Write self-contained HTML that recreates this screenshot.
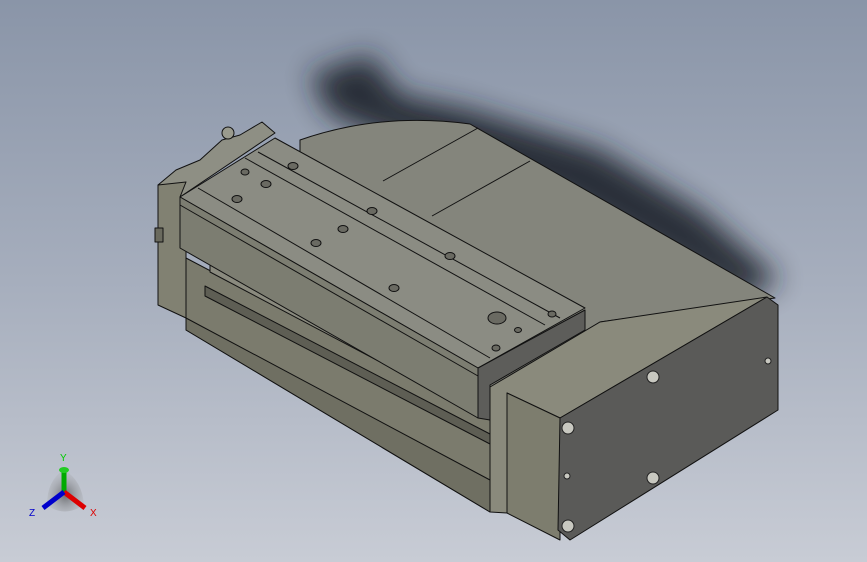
<!DOCTYPE html>
<html><head><meta charset="utf-8"><style>
html,body{margin:0;padding:0;width:867px;height:562px;overflow:hidden}
body{background:linear-gradient(180deg,#8a95a8 0%,#a6aebd 50%,#c8ccd5 100%)}
svg{position:absolute;left:0;top:0}
</style></head><body>
<svg width="867" height="562" viewBox="0 0 867 562">
<defs>
<filter id="bl" x="-30%" y="-30%" width="160%" height="160%"><feGaussianBlur stdDeviation="14"/></filter>
<radialGradient id="tri" cx="50%" cy="60%" r="50%"><stop offset="0" stop-color="#333"/><stop offset="1" stop-color="#999" stop-opacity="0.3"/></radialGradient>
</defs>
<!-- shadow -->
<polygon points="310,75 370,55 400,95 470,110 600,150 700,210 780,280 740,300 560,200 420,150 330,115" fill="#1e232c" opacity="0.9" filter="url(#bl)"/>
<g stroke="#111" stroke-width="1" stroke-linejoin="round">
<!-- motor housing top -->
<path d="M300,140 Q380,112 470,124 L775,298 L600,322 L490,388 L300,280 Z" fill="#84857c"/>
<line x1="383" y1="181" x2="478" y2="128"/>
<line x1="432" y1="216" x2="530" y2="161"/>
<!-- base rail lower -->
<polygon points="186,258 490,418 490,512 186,330" fill="#7b7b6d"/>
<polygon points="186,318 490,480 490,512 186,330" fill="#6f6f62"/>
<polygon points="205,286 490,434 490,444 205,296" fill="#5e5e54"/>
<polygon points="210,262 490,410 490,420 210,272" fill="#8a8a7e"/>
<!-- left block -->
<polygon points="158,185 175,175 186,182 186,318 158,305" fill="#818172"/>
<polygon points="158,185 176,170 200,160 222,140 240,135 262,122 275,133 180,197 186,182" fill="#8e8f84"/>
<rect x="155" y="228" width="8" height="14" fill="#6a6a5e"/>
<circle cx="228" cy="133" r="6" fill="#9a9b8e"/>
<!-- carriage top -->
<polygon points="180,197 275,138 585,308 478,368" fill="#8b8c83"/>
<line x1="198" y1="188" x2="490" y2="358"/>
<line x1="245" y1="158" x2="545" y2="325"/>
<line x1="258" y1="152" x2="560" y2="318"/>
<!-- carriage front face -->
<polygon points="180,197 478,368 478,418 180,248" fill="#7c7d71"/>
<line x1="180" y1="205" x2="478" y2="376"/>
<!-- carriage end plate -->
<polygon points="478,368 585,310 585,330 490,385 490,420 478,418" fill="#5d5d5a"/>
<!-- holes -->
<g fill="#6a6a62">
<ellipse cx="237" cy="199" rx="5" ry="3.5"/><ellipse cx="245" cy="172" rx="4" ry="3"/><ellipse cx="266" cy="184" rx="5" ry="3.5"/>
<ellipse cx="293" cy="166" rx="5" ry="3.5"/><ellipse cx="372" cy="211" rx="5" ry="3.5"/><ellipse cx="343" cy="229" rx="5" ry="3.5"/>
<ellipse cx="316" cy="243" rx="5" ry="3.5"/><ellipse cx="450" cy="256" rx="5" ry="3.5"/><ellipse cx="394" cy="288" rx="5" ry="3.5"/>
<ellipse cx="497" cy="318" rx="9" ry="6"/><ellipse cx="518" cy="330" rx="3.5" ry="2.5"/><ellipse cx="552" cy="314" rx="4" ry="3"/><ellipse cx="496" cy="348" rx="4" ry="3"/>
</g>
<!-- end block -->
<polygon points="490,387 600,322 767,297 560,418 507,393 507,513 490,512" fill="#8a8a7c"/>
<polygon points="507,393 560,418 560,540 507,513" fill="#7d7d6e"/>
<polygon points="560,418 767,297 778,305 778,410 570,540 558,530" fill="#5a5a58"/>
<g fill="#c8c8c0" stroke="#222">
<circle cx="568" cy="428" r="6"/><circle cx="653" cy="377" r="6"/><circle cx="653" cy="478" r="6"/><circle cx="568" cy="526" r="6"/>
<circle cx="768" cy="361" r="3"/><circle cx="567" cy="476" r="3"/>
</g>
</g>
<!-- triad -->
<path d="M47,505 Q47,480 64,470 Q82,480 84,505 Q64,518 47,505 Z" fill="url(#tri)" opacity="0.6"/>
<line x1="64" y1="492" x2="64" y2="470" stroke="#0a0" stroke-width="5"/>
<ellipse cx="64" cy="470" rx="5" ry="3" fill="#2c2"/>
<line x1="64" y1="492" x2="85" y2="508" stroke="#d00" stroke-width="5"/>
<line x1="64" y1="492" x2="43" y2="508" stroke="#00c" stroke-width="5"/>
<text x="60" y="461" font-family="Liberation Sans,sans-serif" font-size="10" fill="#0c0">Y</text>
<text x="90" y="516" font-family="Liberation Sans,sans-serif" font-size="10" fill="#d00">X</text>
<text x="29" y="516" font-family="Liberation Sans,sans-serif" font-size="10" fill="#00c">Z</text>
</svg>
</body></html>
